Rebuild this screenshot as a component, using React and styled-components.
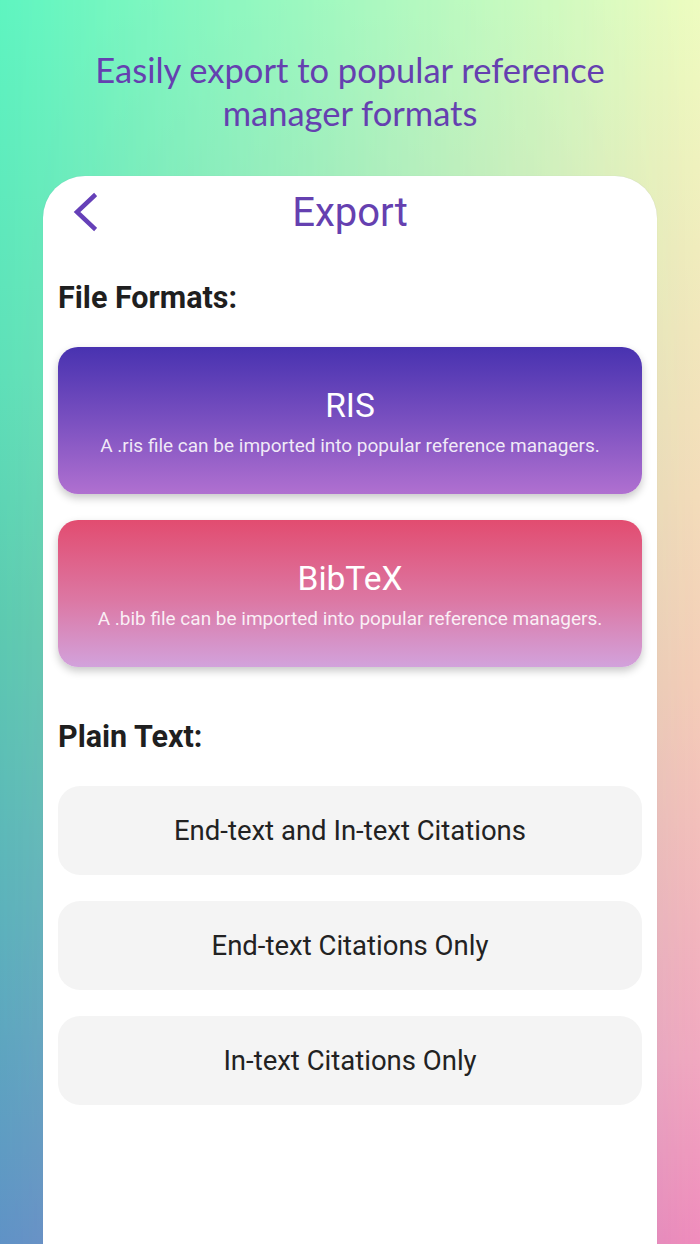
import React from "react";
import styled, { createGlobalStyle } from "styled-components";

const Global = createGlobalStyle`
  html, body { margin: 0; padding: 0; }
  body { font-family: Roboto, "Liberation Sans", sans-serif; }
  * { box-sizing: border-box; }
`;

const Page = styled.div`
  position: relative;
  width: 700px;
  height: 1244px;
  overflow: hidden;
  display: flex;
  flex-direction: column;
  background: linear-gradient(to bottom, #eefcc0 0%, #f4dcba 40%, #f5cdb8 55%, #f2a8c0 85%, #f08cbc 100%);
  &::before {
    content: "";
    position: absolute;
    inset: 0;
    background: linear-gradient(to bottom, #5ef5c0 0%, #5ee0b8 30%, #5ccab0 50%, #5cb0bc 75%, #5f92c6 100%);
    -webkit-mask-image: linear-gradient(to right, #000 0%, rgba(0,0,0,0.6) 40%, transparent 100%);
    mask-image: linear-gradient(to right, #000 0%, rgba(0,0,0,0.6) 40%, transparent 100%);
  }
`;

const Tagline = styled.h1`
  position: relative;
  margin: 0;
  padding-top: 48px;
  text-align: center;
  font-family: Lato, "Open Sans", sans-serif;
  font-weight: 400;
  font-size: 34.5px;
  line-height: 43px;
  color: #6540b0;
`;

const Phone = styled.div`
  position: relative;
  margin: 42px 43px 0;
  flex: 1;
  background: #fff;
  border-radius: 42px 42px 0 0;
  padding: 10px 15px 0;
  box-shadow: 0 0 1px rgba(120, 120, 180, 0.25);
`;

const HeaderRow = styled.div`
  display: grid;
  grid-template-columns: 1fr auto 1fr;
  align-items: center;
  height: 52px;
`;

const BackButton = styled.button`
  justify-self: start;
  border: 0;
  background: none;
  padding: 0;
  margin-left: 15px;
  display: flex;
  cursor: pointer;
`;

const Title = styled.div`
  font-size: 40px;
  color: #6540b0;
  font-weight: 400;
`;

const SectionTitle = styled.h2`
  margin: ${(p) => p.$top}px 0 0;
  font-size: 30.5px;
  line-height: 34px;
  font-weight: 700;
  color: #1f1f1f;
`;

const List = styled.div`
  display: flex;
  flex-direction: column;
  gap: 26px;
  margin-top: 32px;
`;

const FormatCard = styled.div`
  height: 147px;
  border-radius: 20px;
  background: ${(p) => p.$gradient};
  box-shadow: 0 4px 8px rgba(0, 0, 0, 0.22);
  display: flex;
  flex-direction: column;
  align-items: center;
  justify-content: center;
  gap: 8px;
  padding-top: 3px;
  color: #fff;
  cursor: pointer;
`;

const FormatName = styled.div`
  font-size: 33.5px;
  line-height: 40px;
`;

const FormatDesc = styled.div`
  font-size: 19px;
  line-height: 24px;
  color: rgba(255, 255, 255, 0.88);
`;

const PlainButton = styled.div`
  height: 89px;
  border-radius: 22px;
  background: #f4f4f4;
  display: flex;
  align-items: center;
  justify-content: center;
  font-size: 27.5px;
  color: #222;
  cursor: pointer;
`;

const formats = [
  {
    name: "RIS",
    desc: "A .ris file can be imported into popular reference managers.",
    gradient: "linear-gradient(to bottom, #4832b0 0%, #7a50c0 50%, #b070d0 100%)",
  },
  {
    name: "BibTeX",
    desc: "A .bib file can be imported into popular reference managers.",
    gradient: "linear-gradient(to bottom, #e24c70 0%, #dc78a4 55%, #d2a2dc 100%)",
  },
];

const plain = [
  "End-text and In-text Citations",
  "End-text Citations Only",
  "In-text Citations Only",
];

export default function App() {
  return (
    <>
      <Global />
      <Page>
        <Tagline>
          Easily export to popular reference
          <br />
          manager formats
        </Tagline>
        <Phone>
          <HeaderRow>
            <BackButton aria-label="Back">
              <svg width="24" height="40" viewBox="0 0 24 40">
                <path
                  d="M21 4 L4 20 L21 36"
                  fill="none"
                  stroke="#6540b8"
                  strokeWidth="4.5"
                  strokeLinecap="square"
                  strokeLinejoin="miter"
                />
              </svg>
            </BackButton>
            <Title>Export</Title>
            <span />
          </HeaderRow>
          <SectionTitle $top={43}>File Formats:</SectionTitle>
          <List>
            {formats.map((f) => (
              <FormatCard key={f.name} $gradient={f.gradient}>
                <FormatName>{f.name}</FormatName>
                <FormatDesc>{f.desc}</FormatDesc>
              </FormatCard>
            ))}
          </List>
          <SectionTitle $top={53}>Plain Text:</SectionTitle>
          <List>
            {plain.map((t) => (
              <PlainButton key={t}>{t}</PlainButton>
            ))}
          </List>
        </Phone>
      </Page>
    </>
  );
}
